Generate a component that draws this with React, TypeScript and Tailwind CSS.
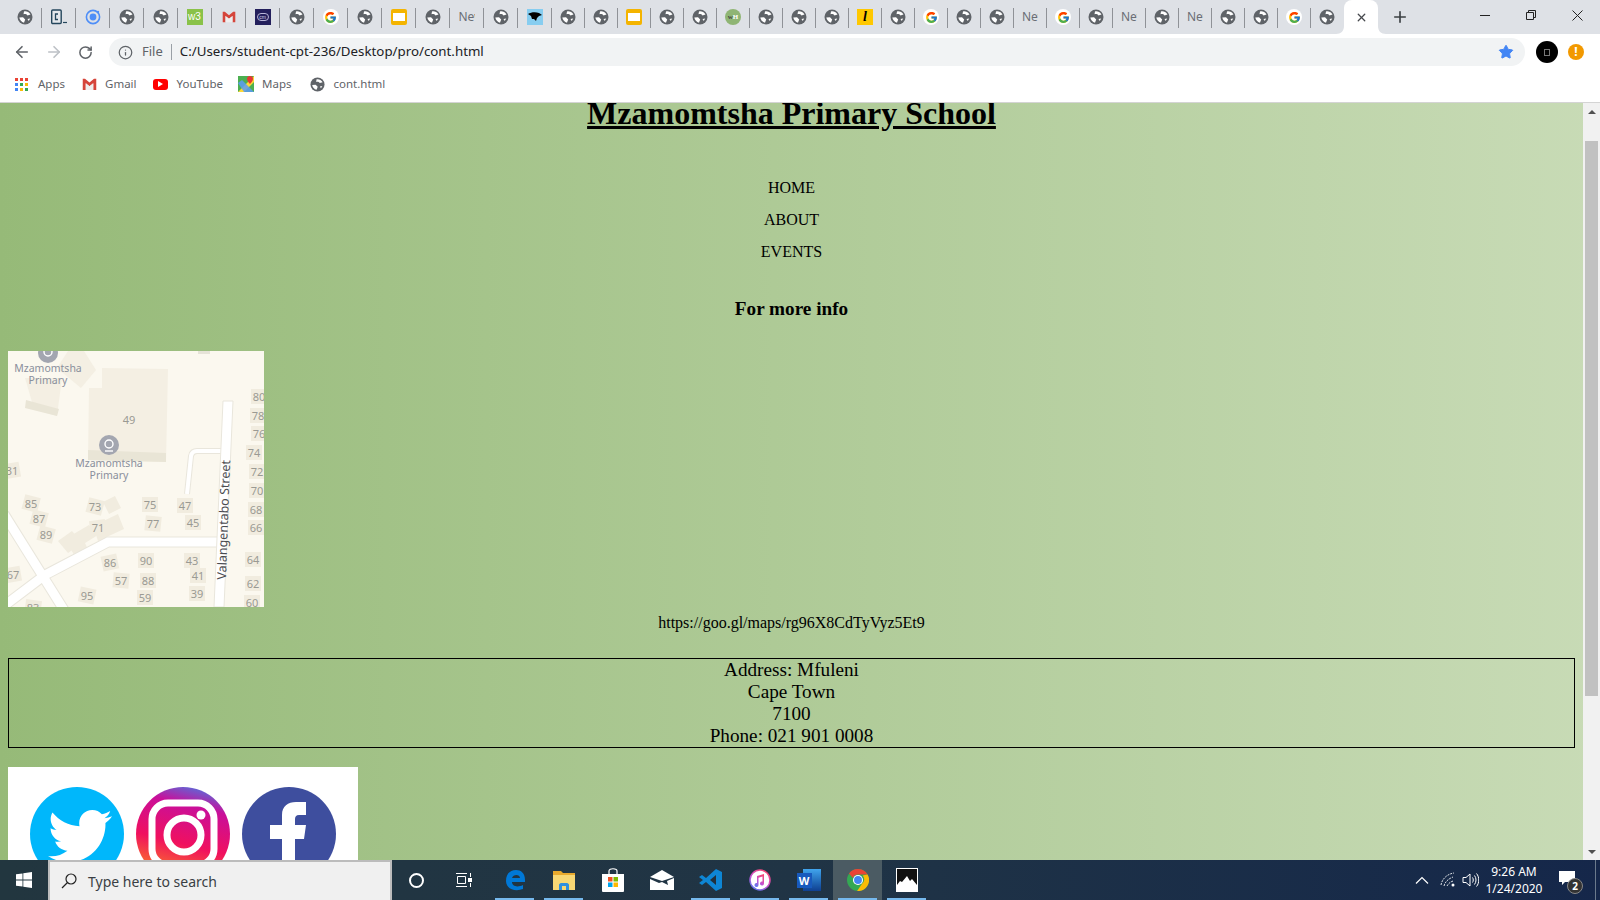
import type { ReactNode } from 'react';
import { ArrowLeft, ArrowRight, Info, Plus, RotateCw, Star, X } from 'lucide-react';
import { FaTwitter } from 'react-icons/fa';
import { FcGoogle } from 'react-icons/fc';

const tabs = [
    'globe', 'term', 'ionic', 'globe', 'globe', 'w3', 'gmail', 'cm', 'globe', 'google',
    'globe', 'slides', 'globe', 'new', 'globe', 'bird', 'globe', 'globe', 'slides', 'globe',
    'globe', 'wh', 'globe', 'globe', 'globe', 'lit', 'globe', 'google', 'globe', 'globe',
    'new', 'google', 'globe', 'new', 'globe', 'new', 'globe', 'globe', 'google', 'globe',
];

const lots: [string, number, number, number?][] = [
    ['49', 121, 69], ['31', 4, 120, -10], ['85', 23, 153, 15], ['87', 31, 168, 15], ['89', 38, 184, 15],
    ['73', 87, 156, 15], ['75', 142, 154], ['47', 177, 155], ['71', 90, 177, -8], ['77', 145, 173, 6],
    ['45', 185, 172], ['80', 251, 46], ['78', 250, 65], ['76', 251, 83], ['74', 246, 102], ['72', 249, 121],
    ['70', 249, 140], ['68', 248, 159], ['66', 248, 177], ['64', 245, 209], ['62', 245, 233], ['60', 244, 252],
    ['86', 102, 212, -12], ['90', 138, 210], ['43', 184, 210], ['41', 190, 225], ['57', 113, 230, 5],
    ['88', 140, 230], ['39', 189, 243], ['59', 137, 247], ['95', 79, 245, 12], ['67', 5, 224, -10],
    ['83', 25, 257, 8],
];

function Globe({ size = 16 }: { size?: number }) {
    return (
        <svg width={size} height={size} viewBox="0 0 16 16">
            <circle cx="8" cy="8" r="7.5" fill="#5f6368" />
            <path d="M7 2.500C9 1.800 12 3 13.500 5.500L10.500 6.500C9.500 5 8 4.800 6.500 5.200z" fill="#fff" />
            <path d="M2.300 8.500L6 8.300 8.200 10.500 7 13.700C4.500 13 2.800 11 2.300 8.500z" fill="#fff" />
            <path d="M10.500 10l2.700-.5-1.500 2.500z" fill="#fff" />
        </svg>
    );
}

function GmailMark({ size = 16 }: { size?: number }) {
    return (
        <svg width={size} height={size * 0.8} viewBox="0 0 20 16">
            <path d="M1 1h3l6 5 6-5h3v15h-4V7l-5 4-5-4v9H1z" fill="#d5453b" />
            <path d="M5 16V7l5 4 5-4v9z" fill="#eeeeee" />
        </svg>
    );
}

function Favicon({ kind }: { kind: string }) {
    if (kind === 'globe') return <Globe />;
    if (kind === 'google')
        return (
            <div className="flex size-4 items-center justify-center rounded-full bg-white">
                <FcGoogle size={13} />
            </div>
        );
    if (kind === 'term')
        return (
            <svg width="16" height="16" viewBox="0 0 16 16">
                <rect x="0.7" y="1" width="9.5" height="13.5" rx="1" fill="#e4e8ec" stroke="#24465c" strokeWidth="1.4" />
                <path d="M7 5H4.500v5.500H7" fill="none" stroke="#24465c" strokeWidth="1.3" />
                <path d="M12 13.500h4" stroke="#24465c" strokeWidth="1.2" />
            </svg>
        );
    if (kind === 'ionic')
        return (
            <svg width="16" height="16" viewBox="0 0 16 16">
                <circle cx="8" cy="8" r="6.600" fill="none" stroke="#4e8ef7" strokeWidth="1.6" />
                <circle cx="8" cy="8" r="3.400" fill="#4e8ef7" />
                <circle cx="13" cy="3" r="1.200" fill="#4e8ef7" />
            </svg>
        );
    if (kind === 'w3')
        return (
            <div className="flex h-4 w-4 items-center justify-center bg-[#8ac249] text-[10px] leading-none text-white font-['Liberation_Sans',sans-serif]">
                w3
            </div>
        );
    if (kind === 'gmail') return <GmailMark size={14} />;
    if (kind === 'cm')
        return (
            <div className="flex size-4 items-center justify-center bg-[#231f5c]">
                <div className="flex h-[8px] w-[12px] items-center justify-center rounded-full border border-[#b9b6d8] text-[5px] leading-none text-[#d7d5ec] font-['Liberation_Sans',sans-serif]">
                    cm
                </div>
            </div>
        );
    if (kind === 'slides')
        return (
            <div className="flex size-4 items-center justify-center rounded-[2px] bg-[#f4b400]">
                <div className="h-2 w-3 bg-white" />
            </div>
        );
    if (kind === 'new')
        return (
            <div className="w-4 overflow-hidden whitespace-nowrap text-[12px] leading-4 text-[#6a6e75] font-['Noto_Sans',sans-serif]">
                New
            </div>
        );
    if (kind === 'bird')
        return (
            <svg width="16" height="16" viewBox="0 0 16 16">
                <rect width="16" height="16" fill="#87cdf0" />
                <path d="M1 5c3-2 8-2 11-1l3 2-3 1-2 2-1 3-2-2-2 0-1-3z" fill="#000" />
            </svg>
        );
    if (kind === 'wh')
        return (
            <div className="flex size-4 items-center justify-center rounded-full bg-[#8fb574] text-[7px] font-bold leading-none font-['Liberation_Serif',serif]">
                <span className="text-[#444]">w</span>
                <span className="text-white">H</span>
            </div>
        );
    return (
        <div className="flex size-4 items-center justify-center bg-[#ffc800] text-[14px] font-bold italic leading-none text-black font-['Liberation_Serif',serif]">
            l
        </div>
    );
}

function TabStrip() {
    return (
        <div className="flex h-[34px] shrink-0 items-stretch bg-[#dee1e6] pl-2">
            {tabs.map((kind, i) => (
                <div
                    key={i}
                    className={`relative flex shrink-0 items-center justify-center pr-px ${i < 16 ? 'w-[34px]' : 'w-[33px]'}`}
                >
                    <Favicon kind={kind} />
                    {i < 39 && <div className="absolute right-0 top-2 h-5 w-px bg-[#8f9297]" />}
                </div>
            ))}
            <div className="relative flex w-[34px] shrink-0 items-center justify-center rounded-t-lg bg-white">
                <X size={13} strokeWidth={2.4} className="text-[#45484c]" />
                <svg width="8" height="8" viewBox="0 0 8 8" className="absolute -left-2 bottom-0">
                    <path d="M8 0v8H0c5 0 8-3 8-8z" fill="#fff" />
                </svg>
                <svg width="8" height="8" viewBox="0 0 8 8" className="absolute -right-2 bottom-0">
                    <path d="M0 0v8h8C3 8 0 5 0 0z" fill="#fff" />
                </svg>
            </div>
            <div className="ml-[13px] flex w-[18px] items-center justify-center">
                <Plus size={18} strokeWidth={2.2} className="text-[#3c4043]" />
            </div>
            <div className="ml-auto flex items-start">
                <div className="flex h-[30px] w-[46px] items-center justify-center">
                    <div className="h-px w-[10px] bg-[#222]" />
                </div>
                <div className="flex h-[30px] w-[46px] items-center justify-center">
                    <svg width="10" height="10" viewBox="0 0 10 10" fill="none" stroke="#222">
                        <path d="M0.5 2.5h7v7h-7zM2.5 2.5v-2h7v7h-2" />
                    </svg>
                </div>
                <div className="flex h-[30px] w-[46px] items-center justify-center">
                    <svg width="11" height="11" viewBox="0 0 11 11" stroke="#222">
                        <path d="M0.5 0.5l10 10M10.5 0.5l-10 10" />
                    </svg>
                </div>
            </div>
        </div>
    );
}

function Toolbar() {
    return (
        <div className="flex h-8 shrink-0 items-center bg-white pt-1 font-['Noto_Sans',sans-serif]">
            <ArrowLeft size={18} strokeWidth={2.2} className="ml-[13px] text-[#5f6368]" />
            <ArrowRight size={18} strokeWidth={2.2} className="ml-[14px] text-[#bdc1c6]" />
            <RotateCw size={15} strokeWidth={2.4} className="ml-[15px] text-[#5f6368]" />
            <div className="ml-[16px] flex h-7 w-[1416px] items-center rounded-full bg-[#f1f3f4] pl-[9px] pr-[10px]">
                <Info size={15} strokeWidth={2} className="text-[#5f6368]" />
                <span className="ml-[9px] text-[13px] text-[#5f6368]">File</span>
                <div className="ml-[8px] h-[16px] w-px bg-[#9aa0a6]" />
                <span className="ml-[8px] text-[13.3px] text-[#202124]">C:/Users/student-cpt-236/Desktop/pro/cont.html</span>
                <Star size={16} fill="#4285f4" strokeWidth={1.5} className="ml-auto mr-[1px] text-[#4285f4]" />
            </div>
            <div className="ml-[11px] flex size-[22px] items-center justify-center rounded-full bg-black">
                <div className="h-[7px] w-[6px] border border-[#777]" />
            </div>
            <div className="ml-[10px] flex size-4 items-center justify-center rounded-full bg-[#f29900] text-[12px] font-bold leading-none text-white">
                !
            </div>
        </div>
    );
}

function BookmarkBar() {
    const appColors = ['#ea4335', '#ea4335', '#ea4335', '#4285f4', '#34a853', '#fbbc05', '#4285f4', '#fbbc05', '#34a853'];
    return (
        <div className="flex h-9 shrink-0 items-center bg-white text-[11.5px] text-[#5f6368] font-['Noto_Sans',sans-serif]">
            <div className="ml-[15px] grid size-[13px] grid-cols-3 gap-[2px]">
                {appColors.map((c, i) => (
                    <div key={i} style={{ backgroundColor: c }} />
                ))}
            </div>
            <span className="ml-[10px]">Apps</span>
            <div className="ml-[17px]"><GmailMark size={15} /></div>
            <span className="ml-[8px]">Gmail</span>
            <div className="ml-[16px] flex h-[11px] w-[15px] items-center justify-center rounded-[3px] bg-[#f00]">
                <div className="size-0 border-y-[3px] border-l-[5px] border-y-transparent border-l-white" />
            </div>
            <span className="ml-[9px]">YouTube</span>
            <svg width="16" height="16" viewBox="0 0 16 16" className="ml-[15px]">
                <path d="M0 0h16v16H0z" fill="#4caf50" />
                <path d="M0 16L16 0v6L6 16z" fill="#fdd835" />
                <path d="M0 7l4-3 12 12H6z" fill="#5c9bf5" opacity="0.85" />
                <path d="M12 0c2 0 3 1 3 3s-3 5-3 5-3-3-3-5 1-3 3-3z" fill="#e53935" />
            </svg>
            <span className="ml-[8px]">Maps</span>
            <div className="ml-[19px]"><Globe size={15} /></div>
            <span className="ml-[8px]">cont.html</span>
        </div>
    );
}

function SchoolMap() {
    return (
        <svg width="256" height="256" viewBox="0 0 256 256" className="block shrink-0 font-['Noto_Sans',sans-serif]">
            <rect width="256" height="256" fill="#fbf8ef" />
            <path d="M94 17l66 1-2 93-78-2 1-72h13z" fill="#f4efe3" />
            <path d="M80 99l78 3v9l-78-2z" fill="#e9e5d6" />
            <path d="M17 27h37l-5 38-23-7z" fill="#f4efe3" />
            <path d="M18 49l-1 8 32 8 2-7z" fill="#e9e5d6" />
            <path d="M60 0h16l12 19-15 18-24-20z" fill="#f4efe3" />
            <path d="M190 0h12v3h-12z" fill="#e6e3d8" />
            <path d="M50 190l14-10 10 12-14 10zM57 188l24-14 9 10-13 8 4 9-12 8z" fill="#f1ecdf" />
            <path d="M85 175l25-12 6 15-26 12z" fill="#f1ecdf" />
            <path d="M95 151l12-6 6 12-12 6z" fill="#f1ecdf" />
            <g fill="none" stroke="#e9e6dc" strokeWidth="11">
                <path d="M-4 255L37 224l63-33h116" />
                <path d="M-4 163L56 259" />
            </g>
            <g fill="none" stroke="#ffffff" strokeWidth="9">
                <path d="M-4 255L37 224l63-33h116" />
                <path d="M-4 163L56 259" />
            </g>
            <path d="M179 143l4-38q1-5 6-5h32" fill="none" stroke="#e9e6dc" strokeWidth="6" />
            <path d="M179 143l4-38q1-5 6-5h32" fill="none" stroke="#fff" strokeWidth="4" />
            <path d="M215 50h10l-9 206h-10z" fill="#fff" stroke="#e9e6dc" />
            {lots.map(([n, x, y, r]) => (
                <g key={n}>
                    {n !== '49' && (
                        <rect
                            x={x - 8}
                            y={y - 8}
                            width="16"
                            height="15"
                            fill="#f1ecdf"
                            transform={`rotate(${r ?? 0} ${x} ${y})`}
                        />
                    )}
                    <text x={x} y={y + 4} textAnchor="middle" fontSize="11" fill="#9a9a93">{n}</text>
                </g>
            ))}
            <g fill="#8a8f9c" fontSize="10.5" textAnchor="middle">
                <circle cx="101" cy="94" r="10" fill="#a3a6b0" />
                <circle cx="101" cy="93" r="4" fill="none" stroke="#fff" strokeWidth="1.4" />
                <path d="M97 100h8" stroke="#fff" strokeWidth="1.4" />
                <text x="101" y="116">Mzamomtsha</text>
                <text x="101" y="128">Primary</text>
                <circle cx="40" cy="2" r="10" fill="#a3a6b0" />
                <circle cx="40" cy="1" r="4" fill="none" stroke="#fff" strokeWidth="1.4" />
                <text x="40" y="21">Mzamomtsha</text>
                <text x="40" y="33">Primary</text>
            </g>
            <text
                transform="translate(220 169) rotate(-88)"
                textAnchor="middle"
                fontSize="12.5"
                fill="#4a4b4f"
            >
                Valangentabo Street
            </text>
        </svg>
    );
}

function SocialImage() {
    return (
        <svg width="350" height="120" viewBox="0 0 350 120" className="mt-[19px] block shrink-0">
            <defs>
                <linearGradient id="insta" x1="0.3" y1="1" x2="0.55" y2="0">
                    <stop offset="0" stopColor="#fd8a1c" />
                    <stop offset="0.42" stopColor="#f0105f" />
                    <stop offset="0.82" stopColor="#c90f9a" />
                    <stop offset="1" stopColor="#6a5ed0" />
                </linearGradient>
            </defs>
            <rect width="350" height="120" fill="#fff" />
            <circle cx="69" cy="67" r="47" fill="#00b7fb" />
            <FaTwitter x="40" y="37" size={64} color="#fff" />
            <circle cx="175" cy="67" r="47" fill="url(#insta)" />
            <rect x="144" y="36" width="62" height="62" rx="16" fill="none" stroke="#fff" strokeWidth="7" />
            <circle cx="176" cy="68" r="17" fill="none" stroke="#fff" strokeWidth="7" />
            <circle cx="193" cy="48" r="4.5" fill="#fff" />
            <circle cx="281" cy="67" r="47" fill="#3e4e9e" />
            <path d="M274 120V72h-12V58h12V48c0-9 6-13 14-13h10v13h-7c-3 0-4 2-4 4v6h11l-2 14h-9v48z" fill="#fff" />
        </svg>
    );
}

function Scrollbar() {
    return (
        <div className="flex w-[17px] shrink-0 flex-col items-center bg-[#f1f1f1]">
            <div className="flex h-[17px] w-full items-center justify-center">
                <div className="size-0 border-x-[4px] border-b-[4px] border-x-transparent border-b-[#505050]" />
            </div>
            <div className="mt-[21px] h-[555px] w-[13px] bg-[#c1c1c1]" />
            <div className="mt-auto flex h-[17px] w-full items-center justify-center">
                <div className="size-0 border-x-[4px] border-t-[4px] border-x-transparent border-t-[#505050]" />
            </div>
        </div>
    );
}

function Page() {
    return (
        <div className="flex min-h-0 flex-1 overflow-hidden bg-gradient-to-r from-[#96ba78] to-[#c8dbb6]">
            <main className="flex min-w-0 flex-1 flex-col px-2 text-black font-['Liberation_Serif',serif]">
                <h1 className="-mt-[8px] text-center text-[32px] font-bold leading-[37px] underline">
                    Mzamomtsha Primary School
                </h1>
                <nav className="mt-[47px] flex flex-col gap-[14px] text-center text-[16px] leading-[18px]">
                    <a>HOME</a>
                    <a>ABOUT</a>
                    <a>EVENTS</a>
                </nav>
                <h3 className="mt-[37px] text-center text-[19.2px] font-bold leading-[22px]">For more info</h3>
                <div className="mt-[31px]">
                    <SchoolMap />
                </div>
                <p className="mt-[7px] text-center text-[16px] leading-[18px]">https://goo.gl/maps/rg96X8CdTyVyz5Et9</p>
                <div className="mt-[26px] shrink-0 border border-black text-center text-[19.2px] leading-[22px]">
                    Address: Mfuleni
                    <br />
                    Cape Town
                    <br />
                    7100
                    <br />
                    Phone: 021 901 0008
                </div>
                <SocialImage />
            </main>
            <Scrollbar />
        </div>
    );
}

function TaskSlot({ children, open, active }: { children: ReactNode; open?: boolean; active?: boolean }) {
    return (
        <div className={`relative flex h-10 w-[49px] items-center justify-center ${active ? 'bg-[#4b5b63]' : ''}`}>
            {children}
            {open && <div className="absolute bottom-0 left-[5px] right-[5px] h-[2px] bg-[#76b9ed]" />}
        </div>
    );
}

function Taskbar() {
    return (
        <div className="flex h-10 shrink-0 items-center bg-gradient-to-r from-[#22363f] via-[#203445] to-[#15274a] font-['Noto_Sans',sans-serif]">
            <div className="flex w-12 items-center justify-center">
                <svg width="16" height="16" viewBox="0 0 16 16" fill="#fff">
                    <path d="M0 2.3l6.5-.9v6.2H0zM7.3 1.3L16 0v7.6H7.3zM0 8.4h6.5v6.2L0 13.7zM7.3 8.4H16V16l-8.7-1.3z" />
                </svg>
            </div>
            <div className="flex h-10 w-[344px] items-center border-2 border-b-0 border-[#bcbcbc] bg-[#f0f0f0] pl-[10px]">
                <svg width="18" height="18" viewBox="0 0 18 18" fill="none" stroke="#222" strokeWidth="1.2">
                    <circle cx="11" cy="7" r="5" />
                    <path d="M7.5 10.5L2 16" />
                </svg>
                <span className="ml-[10px] text-[14px] text-[#3a3f44]">Type here to search</span>
            </div>
            <div className="flex w-12 items-center justify-center">
                <div className="size-[15px] rounded-full border-[2px] border-white" />
            </div>
            <div className="flex w-12 items-center justify-center">
                <svg width="16" height="16" viewBox="0 0 16 16" fill="none" stroke="#fff">
                    <path d="M0 1.5h11M0 14.5h11M1.5 4.5h8v7h-8z" />
                    <path d="M14.5 1v4M14.5 11v4" />
                    <rect x="12.5" y="6.5" width="3" height="3" fill="#fff" />
                </svg>
            </div>
            <div className="ml-[2px] flex">
                <TaskSlot open>
                    <svg width="22" height="24" viewBox="0 0 22 24" fill="none">
                        <path d="M2 13C2 6 6 2 12 2c5 0 9 3 9 10v2H8c0 4 5 6 11 3v4c-8 3-17 0-17-8zm6-3h8c0-4-7-4-8 0z" fill="#0078d7" fillRule="evenodd" />
                    </svg>
                </TaskSlot>
                <TaskSlot open>
                    <svg width="22" height="20" viewBox="0 0 22 20">
                        <path d="M0 1h8l2 2h12v15H0z" fill="#e8a92d" />
                        <path d="M0 5h22v15H0z" fill="#f7d774" />
                        <path d="M6 20v-5c0-1 1-2 2-2h6c1 0 2 1 2 2v5h-3v-4H9v4z" fill="#2f8fdf" />
                    </svg>
                </TaskSlot>
                <TaskSlot>
                    <svg width="22" height="24" viewBox="0 0 22 24">
                        <path d="M7 6V3c0-3 8-3 8 0v3" fill="none" stroke="#fff" strokeWidth="1.2" />
                        <path d="M0 6h22v17a1 1 0 0 1-1 1H1a1 1 0 0 1-1-1z" fill="#fff" />
                        <path d="M6 9h4.500v4.500H6z" fill="#f25022" />
                        <path d="M11.500 9H16v4.500h-4.500z" fill="#7fba00" />
                        <path d="M6 14.500h4.500V19H6z" fill="#00a4ef" />
                        <path d="M11.500 14.500H16V19h-4.500z" fill="#ffb900" />
                    </svg>
                </TaskSlot>
                <TaskSlot>
                    <svg width="24" height="20" viewBox="0 0 24 20" fill="#fff">
                        <path d="M12 0l12 7-12 4L0 7z" />
                        <path d="M0 9l9 4 3-1 6 3-1-4 7-3v12H0z" />
                    </svg>
                </TaskSlot>
                <TaskSlot open>
                    <svg width="24" height="24" viewBox="0 0 24 24">
                        <path d="M17 1l6 3v16l-6 3-10-9-4 3-3-2 4-3-4-3 3-2 4 3z" fill="#0e86d4" />
                        <path d="M17 7v10l-6-5z" fill="#22303a" />
                    </svg>
                </TaskSlot>
                <TaskSlot open>
                    <svg width="22" height="22" viewBox="0 0 22 22">
                        <defs>
                            <linearGradient id="tunes" x1="0.8" y1="0" x2="0.2" y2="1">
                                <stop offset="0" stopColor="#f9486f" />
                                <stop offset="0.55" stopColor="#c84fd0" />
                                <stop offset="1" stopColor="#5b7bf0" />
                            </linearGradient>
                        </defs>
                        <circle cx="11" cy="11" r="10" fill="#fff" stroke="url(#tunes)" strokeWidth="1.5" />
                        <path d="M8 7l7-2v9.500a2 2 0 1 1-1.500-1.900V7.500L9.500 8.700v7.300a2 2 0 1 1-1.500-1.900z" fill="url(#tunes)" />
                    </svg>
                </TaskSlot>
                <TaskSlot open>
                    <div className="relative flex h-[22px] w-6 justify-end">
                        <div className="h-full w-[18px] bg-gradient-to-b from-[#41a5ee] to-[#103f91]" />
                        <div className="absolute left-0 top-1 flex size-[15px] items-center justify-center bg-[#185abd] text-[11px] font-bold leading-none text-white">
                            W
                        </div>
                    </div>
                </TaskSlot>
                <TaskSlot open active>
                    <svg width="22" height="22" viewBox="0 0 24 24">
                        <circle cx="12" cy="12" r="12" fill="#34a853" />
                        <path d="M12 0a12 12 0 0 1 10.4 6H12a6 6 0 0 0-5.6 3.8L2.2 4.8A12 12 0 0 1 12 0z" fill="#ea4335" />
                        <path d="M22.4 6A12 12 0 0 1 11 24l5.4-8A6 6 0 0 0 17 7z" fill="#fbbc05" />
                        <circle cx="12" cy="12" r="5.5" fill="#fff" />
                        <circle cx="12" cy="12" r="4.3" fill="#4285f4" />
                    </svg>
                </TaskSlot>
                <TaskSlot open>
                    <svg width="22" height="24" viewBox="0 0 22 24">
                        <rect width="22" height="24" fill="#fff" />
                        <path d="M1 1h20v16l-5-6-2 2-3-5-5 6-2-1-3 4z" fill="#111" />
                    </svg>
                </TaskSlot>
            </div>
            <div className="ml-auto flex items-center text-white">
                <svg width="14" height="8" viewBox="0 0 14 8" fill="none" stroke="#fff" strokeWidth="1.2">
                    <path d="M1 7.5l6-6 6 6" />
                </svg>
                <svg width="16" height="16" viewBox="0 0 16 16" fill="none" stroke="#dfe3e8" className="ml-[11px]">
                    <path d="M1 13C2 7 7 2 14 1M4 14c1-4 4-7 9-9M7 14c1-2 3-4 6-5" strokeDasharray="2 1" />
                    <circle cx="13" cy="13" r="1.5" fill="#fff" stroke="none" />
                </svg>
                <svg width="17" height="16" viewBox="0 0 17 16" fill="none" stroke="#fff" className="ml-[6px]">
                    <path d="M1 5.500h3L8 2v12L4 10.500H1z" />
                    <path d="M10.500 5.500c1 1.500 1 3.500 0 5M12.500 3.500c2 2.500 2 6.500 0 9M14.500 1.500c3 3.500 3 9.500 0 13" />
                </svg>
                <div className="ml-[2px] flex w-[66px] flex-col items-center text-[12px] leading-[17px]">
                    <span>9:26 AM</span>
                    <span>1/24/2020</span>
                </div>
                <div className="relative ml-[12px] flex h-10 w-9 items-center">
                    <svg width="16" height="15" viewBox="0 0 16 15" fill="#fff" className="-mt-[3px]">
                        <path d="M0 0h16v11H6l-3 3v-3H0z" />
                    </svg>
                    <div className="absolute left-[8px] top-[18px] flex size-[16px] items-center justify-center rounded-full border border-[#888] bg-[#333] text-[10px] font-bold leading-none text-white">
                        2
                    </div>
                </div>
                <div className="h-10 w-px bg-[#6b7a8c]" />
                <div className="w-[4px]" />
            </div>
        </div>
    );
}

export default function App() {
    return (
        <div className="flex h-[900px] w-[1600px] flex-col overflow-hidden">
            <TabStrip />
            <Toolbar />
            <BookmarkBar />
            <div className="h-px shrink-0 bg-[#d4d4d4]" />
            <Page />
            <Taskbar />
        </div>
    );
}
